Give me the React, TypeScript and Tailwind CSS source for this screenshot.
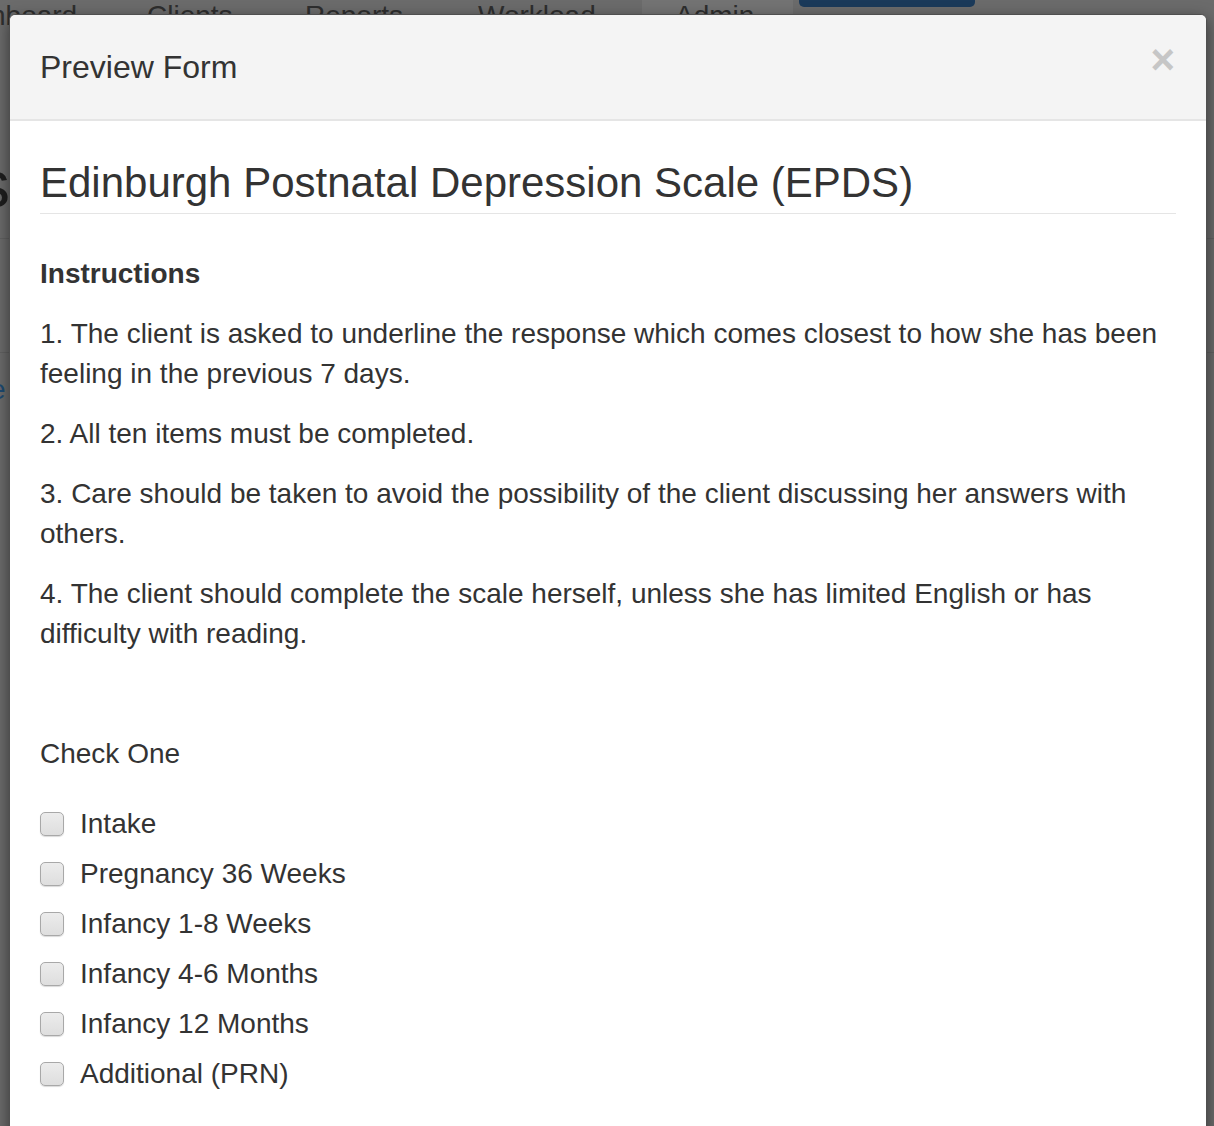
import React from "react";

const items = [
  "Intake",
  "Pregnancy 36 Weeks",
  "Infancy 1-8 Weeks",
  "Infancy 4-6 Months",
  "Infancy 12 Months",
  "Additional (PRN)",
];

export default function App() {
  return (
    <div
      className="relative h-[1126px] w-full overflow-hidden bg-[#6b6b6b]"
      style={{ fontFamily: '"Liberation Sans", Arial, sans-serif' }}
    >
      {/* dimmed page behind the modal */}
      <div className="flex h-[14px] items-start">
        <div className="ml-[-10px] mt-[0px] flex h-[14px] text-[28px] leading-[32px] text-[#2e2e2e]">
          <span className="w-[157px]">hboard</span>
          <span className="w-[158px]">Clients</span>
          <span className="w-[173px]">Reports</span>
          <span className="w-[164px]">Workload</span>
          <span className="w-[151px] bg-[#737373] pl-[33px]">Admin</span>
        </div>
        <div className="ml-[6px] h-[7px] w-[176px] rounded-b-[5px] bg-[#1b3a5a]" />
      </div>
      <div className="mt-[137px] ml-[-23px] text-[66px] leading-[66px] text-[#1e1e1e]">s</div>
      <div className="mt-[21px] h-px w-full bg-[#616161]" />
      <div className="mt-[113px] h-px w-full bg-[#616161]" />
      <div className="ml-[-10px] mt-[17px] text-[28px] leading-[40px] text-[#1d4a72]">e</div>

      {/* modal */}
      <div className="absolute left-[9px] top-[14px] w-[1198px] h-[1130px] rounded-[6px] border border-[#4f4f4f] bg-white shadow-[0_5px_15px_rgba(0,0,0,0.5)]">
        <div className="flex h-[106px] items-center justify-between rounded-t-[6px] border-b-2 border-[#e5e5e5] bg-[#f4f4f4] px-[30px]">
          <div className="text-[32px] leading-[40px] text-[#333333]">Preview Form</div>
          <div className="mt-[-14px] mr-[1px] text-[42px] font-bold leading-[40px] text-[#c6c6c6]">×</div>
        </div>
        <div className="px-[30px] text-[#333333]">
          <h1 className="mt-[39px] border-b border-[#e5e5e5] pb-[7px] text-[42px] leading-[46px]">
            Edinburgh Postnatal Depression Scale (EPDS)
          </h1>
          <div className="mt-[40px] text-[28px] font-bold leading-[40px]">Instructions</div>
          <div className="mt-[20px] flex flex-col gap-[20px] text-[28px] leading-[40px]">
            <p>
              1. The client is asked to underline the response which comes closest to how she has been
              feeling in the previous 7 days.
            </p>
            <p>2. All ten items must be completed.</p>
            <p>
              3. Care should be taken to avoid the possibility of the client discussing her answers with
              others.
            </p>
            <p>
              4. The client should complete the scale herself, unless she has limited English or has
              difficulty with reading.
            </p>
          </div>
          <div className="mt-[80px] text-[28px] leading-[40px]">Check One</div>
          <div className="mt-[30px] flex flex-col gap-[10px]">
            {items.map((t) => (
              <label key={t} className="flex h-[40px] items-center text-[28px] leading-[40px]">
                <span className="mr-[16px] h-[24px] w-[24px] rounded-[5px] border border-[#a8a8a8] bg-gradient-to-b from-[#ececec] to-[#dedede] shadow-[0_1px_1px_rgba(0,0,0,0.15)]" />
                {t}
              </label>
            ))}
          </div>
        </div>
      </div>
    </div>
  );
}
